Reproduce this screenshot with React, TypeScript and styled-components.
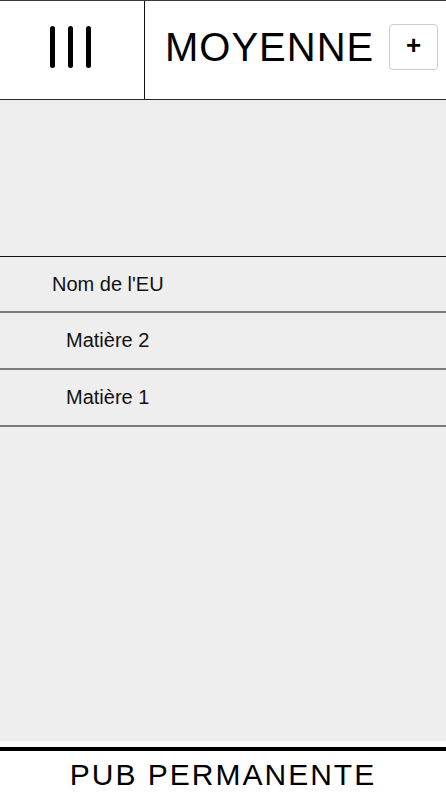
import React from 'react';
import styled, { createGlobalStyle } from 'styled-components';

const GlobalStyle = createGlobalStyle`
	* {
		box-sizing: border-box;
	}
	body {
		margin: 0;
		background: #ffffff;
		font-family: 'Liberation Sans', Arial, Helvetica, sans-serif;
		color: #111111;
	}
`;

const items = [
	{ label: "Nom de l'EU", level: 0 },
	{ label: 'Matière 2', level: 1 },
	{ label: 'Matière 1', level: 1 },
];

export default function App() {
	return (
		<>
			<GlobalStyle />
			<Page>
				<Header>
					<MenuCell>
						<Bar />
						<Bar />
						<Bar />
					</MenuCell>
					<TitleCell>
						<Title>MOYENNE</Title>
						<AddButton>+</AddButton>
					</TitleCell>
				</Header>
				<Main>
					<List>
						{items.map((item, i) => (
							<Row key={item.label} $first={i === 0} $level={item.level}>
								{item.label}
							</Row>
						))}
					</List>
				</Main>
				<Footer>PUB PERMANENTE</Footer>
			</Page>
		</>
	);
}

const Page = styled.div`
	display: flex;
	flex-direction: column;
	height: 800px;
	width: 446px;
`;

const Header = styled.header`
	display: grid;
	grid-template-columns: 145px 1fr;
	height: 100px;
	border-top: 1px solid #3a3a3a;
	border-bottom: 1px solid #2a2a2a;
	background: #ffffff;
`;

const MenuCell = styled.div`
	display: flex;
	align-items: center;
	justify-content: center;
	gap: 13px;
	padding: 0 4px 6px 0;
	border-right: 1px solid #111111;
`;

const Bar = styled.span`
	display: block;
	width: 5px;
	height: 42px;
	border-radius: 3px;
	background: #000000;
`;

const TitleCell = styled.div`
	display: flex;
	align-items: center;
	justify-content: space-between;
	padding: 0 8px 6px 20px;
`;

const Title = styled.h1`
	margin: 0;
	font-size: 40px;
	font-weight: 400;
	letter-spacing: 1px;
	color: #000000;
`;

const AddButton = styled.button`
	width: 49px;
	height: 46px;
	border: 1px solid #cccccc;
	border-radius: 4px;
	background: #ffffff;
	font-family: 'Liberation Sans', Arial, sans-serif;
	font-size: 26px;
	font-weight: 700;
	color: #000000;
	padding: 0 0 3px;
	cursor: pointer;
`;

const Main = styled.main`
	flex: 1;
	background: #eeeeee;
	padding-top: 156px;
	margin-bottom: 6px;
`;

const List = styled.ul`
	list-style: none;
	margin: 0;
	padding: 0;
`;

const Row = styled.li<{ $first: boolean; $level: number }>`
	display: flex;
	align-items: center;
	height: 57px;
	padding-left: ${(p) => 52 + p.$level * 14}px;
	font-size: 20px;
	color: #111111;
	border-top: ${(p) => (p.$first ? '1px solid #111111' : 'none')};
	border-bottom: 2px solid #7a7a7a;
`;

const Footer = styled.footer`
	display: flex;
	align-items: center;
	justify-content: center;
	height: 53px;
	border-top: 4px solid #000000;
	font-size: 30px;
	letter-spacing: 2px;
	color: #000000;
	padding-bottom: 2px;
`;
